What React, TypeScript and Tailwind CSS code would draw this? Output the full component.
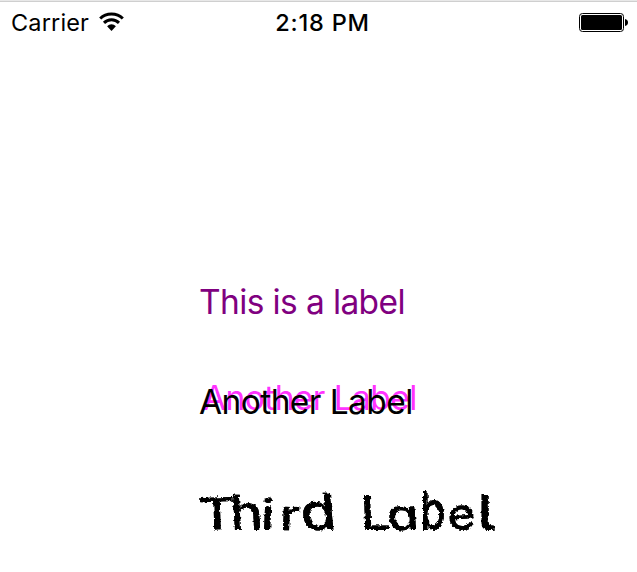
const chalkLetters: { char: string; cell: string; glyph: string }[] = [
  { char: 'T', cell: 'w-[32px]', glyph: 'scale-x-[1.32] scale-y-[1.02] rotate-[-2deg]' },
  { char: 'h', cell: 'w-[29px]', glyph: 'scale-x-[1.28] scale-y-[1.13] skew-x-[3deg]' },
  { char: 'i', cell: 'w-[19px]', glyph: 'scale-x-[1.3] skew-x-[-2deg]' },
  { char: 'r', cell: 'w-[23px]', glyph: 'scale-x-[1.3] rotate-[2deg]' },
  { char: 'd', cell: 'w-[36px]', glyph: 'scale-x-[1.34] scale-y-[1.19] skew-x-[5deg]' },
  { char: ' ', cell: 'w-[23px]', glyph: '' },
  { char: 'L', cell: 'w-[27px]', glyph: 'scale-x-[1.25] scale-y-[1.12] skew-x-[2deg]' },
  { char: 'a', cell: 'w-[32px]', glyph: 'scale-x-[1.2] skew-x-[4deg]' },
  { char: 'b', cell: 'w-[28px]', glyph: 'scale-x-[0.97] scale-y-[1.26]' },
  { char: 'e', cell: 'w-[29px]', glyph: 'scale-x-[1.12] rotate-[-3deg]' },
  { char: 'l', cell: 'w-[20px]', glyph: 'scale-x-[1.5] scale-y-[1.13]' },
];

function WifiIcon() {
  return (
    <svg className="ml-[10px] mt-[11px] h-[20px] w-[25px]" viewBox="0 0 25 20" fill="none" stroke="#000" strokeWidth="3">
      <path d="M1.2 6.5C7.2.6 17.8.6 23.8 6.5" />
      <path d="M5 10.9C9.1 6.8 15.9 6.8 20 10.9" />
      <path d="M8.1 14.2C10.6 11.5 14.4 11.5 16.9 14.2L12.5 18.9Z" fill="#000" stroke="none" />
    </svg>
  );
}

function Battery() {
  return (
    <svg className="mr-[8px] mt-[11px] h-[21px] w-[50px]" viewBox="0 0 50 21">
      <rect x=".5" y="1.5" width="44" height="18" rx="3" fill="#fff" stroke="#000" />
      <rect x="2" y="3" width="41" height="15" rx="1.5" fill="#000" />
      <path d="M46 7c2 .5 3 1.8 3 3.5s-1 3-3 3.5Z" fill="#000" />
    </svg>
  );
}

export default function App() {
  return (
    <main className="flex h-[572px] w-[637px] flex-col overflow-hidden bg-white font-['Inter',sans-serif] text-black">
      <header className="grid h-[47px] grid-cols-3 border-t border-[#e8e8e8] shadow-[inset_0_1px_0_#cfcfcf]">
        <div className="flex">
          <span className="ml-[11px] mt-[7px] whitespace-nowrap text-[23.5px] leading-[30px] tracking-[0.15px]">Carrier</span>
          <WifiIcon />
        </div>
        <span className="mt-[7px] whitespace-nowrap pl-[8px] text-center text-[23.5px] font-medium leading-[30px] tracking-[0.8px]">2:18 PM</span>
        <div className="flex justify-end">
          <Battery />
        </div>
      </header>
      <section className="flex flex-col pl-[199px] pt-[235px]">
        <p className="h-[100px] whitespace-nowrap text-[33.5px] leading-[40px] tracking-[-0.62px] text-[#800080]">This is a label</p>
        <p className="h-[98px] whitespace-nowrap text-[33.5px] leading-[40px] tracking-[-0.58px] [text-shadow:4px_-4px_0_#ff33ff]">Another Label</p>
        <p className="flex whitespace-pre text-[43px] font-medium leading-[68px] [filter:url(#chalk)] [font-feature-settings:'cv11','cv05']">
          {chalkLetters.map(({ char, cell, glyph }, i) => (
            <span key={i} className={cell}>
              <span className={`inline-block origin-[0_50px] ${glyph}`}>{char}</span>
            </span>
          ))}
        </p>
      </section>
      <svg width="0" height="0" aria-hidden="true">
        <filter id="chalk" x="-5%" y="-5%" width="110%" height="110%" colorInterpolationFilters="sRGB">
          <feMorphology in="SourceGraphic" operator="dilate" radius="0.3" result="bold" />
          <feTurbulence type="fractalNoise" baseFrequency="0.35" numOctaves="2" seed="4" result="grain" />
          <feDisplacementMap in="SourceGraphic" in2="grain" scale="4" xChannelSelector="R" yChannelSelector="G" result="rough" />
          <feMerge>
            <feMergeNode in="rough" />
            <feMergeNode in="rough" />
          </feMerge>
        </filter>
      </svg>
    </main>
  );
}
